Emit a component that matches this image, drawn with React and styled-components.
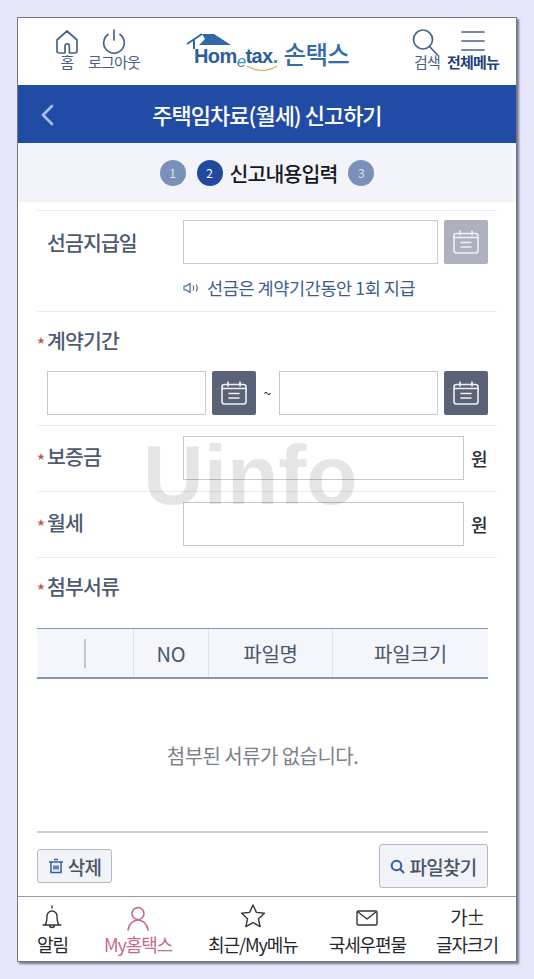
import React from 'react';
import styled, { createGlobalStyle } from 'styled-components';

const GlobalStyle = createGlobalStyle`
  html, body {
    margin: 0;
    padding: 0;
    background: #e6e6fb;
    font-family: "Noto Sans CJK KR", "Noto Sans", sans-serif;
  }
  * { box-sizing: border-box; }
`;

const Page = styled.div`
  width: 534px;
  height: 979px;
  padding: 17px;
  overflow: hidden;
`;

const Phone = styled.div`
  position: relative;
  width: 500px;
  height: 945px;
  display: flex;
  flex-direction: column;
  background: #fff;
  border: 1px solid #77777f;
  box-shadow: 2px 2px 2px #77778a;
`;

const Header = styled.header`
  height: 67px;
  flex: none;
  display: flex;
  align-items: flex-start;
  padding: 10px 17px 0 27px;
`;

const HeaderItem = styled.div`
  width: ${p => p.$w}px;
  margin-left: ${p => p.$ml || 0}px;
  display: flex;
  flex-direction: column;
  align-items: center;
  color: ${p => (p.$strong ? '#1f3f7c' : '#4a5f7f')};
  font-size: 15px;
  font-weight: ${p => (p.$strong ? 700 : 400)};
  letter-spacing: -0.8px;
  line-height: 18px;
  white-space: nowrap;
  svg { display: block; height: 28px; margin-bottom: -3px; }
`;

const Logo = styled.div`
  position: relative;
  width: 164px;
  height: 46px;
  margin-left: 45px;
  margin-top: 5px;
  display: flex;
  align-items: flex-end;
  white-space: nowrap;
`;

const Roof = styled.svg`
  position: absolute;
  left: 0;
  top: 0;
`;

const LogoWord = styled.span`
  margin-left: 8px;
  margin-bottom: 10px;
  font-family: "Liberation Sans", Arial, sans-serif;
  font-size: 20px;
  font-weight: 700;
  letter-spacing: -0.6px;
  line-height: 22px;
  color: #2a5f9c;
`;

const LogoE = styled.span`
  font-style: italic;
  font-weight: 400;
  font-size: 17px;
  color: #3f8fb0;
  position: relative;
  top: 4px;
`;

const LogoDot = styled.span`
  color: #3c9a6a;
`;

const LogoName = styled.span`
  margin-left: 6px;
  margin-bottom: 10px;
  font-size: 24.5px;
  font-weight: 500;
  letter-spacing: -0.7px;
  line-height: 30px;
  color: #2f6ca8;
`;

const Smile = styled.svg`
  position: absolute;
  left: 59px;
  top: 32px;
`;

const RightGroup = styled.div`
  margin-left: auto;
  display: flex;
  gap: 6px;
`;

const SearchGlyph = styled.span`
  display: block;
  margin-right: 5px;
`;

const TitleBar = styled.div`
  position: relative;
  height: 58px;
  flex: none;
  display: flex;
  align-items: center;
  justify-content: center;
  background: #214ca5;
  color: #fff;
  font-size: 22px;
  font-weight: 500;
  letter-spacing: -1px;
`;

const BackIcon = styled.svg`
  position: absolute;
  left: 22px;
  top: 19px;
`;

const Stepper = styled.div`
  height: 59px;
  flex: none;
  display: flex;
  align-items: center;
  justify-content: center;
  gap: 11px;
  background: #f2f4fa;
`;

const StepDot = styled.span`
  width: 26px;
  height: 26px;
  border-radius: 50%;
  display: flex;
  align-items: center;
  justify-content: center;
  font-size: 12px;
  letter-spacing: 0;
  font-weight: 400;
  color: ${p => (p.$active ? '#fff' : '#dde3f0')};
  background: ${p => (p.$active ? '#214a9e' : '#7b90b8')};
`;

const StepActive = styled.div`
  display: flex;
  align-items: center;
  gap: 7px;
  color: #16181e;
  font-size: 20.5px;
  font-weight: 500;
  letter-spacing: -0.9px;
`;

const Content = styled.main`
  position: relative;
  flex: 1;
  padding: 8px 19px 0;
`;

const Watermark = styled.div`
  position: absolute;
  left: 125px;
  top: 223px;
  font-family: "Liberation Sans", Arial, sans-serif;
  font-size: 84px;
  font-weight: 700;
  line-height: 100px;
  color: rgba(0, 0, 0, 0.1);
  pointer-events: none;
`;

const Row = styled.section`
  border-top: 1px solid #eaebef;
  height: ${p => p.$h}px;
  padding-top: ${p => p.$pt ?? 9}px;
`;

const Line = styled.div`
  display: flex;
  align-items: center;
  padding-left: ${p => p.$pl || 0}px;
  margin-top: ${p => p.$mt || 0}px;
`;

const Label = styled.label`
  display: flex;
  align-items: center;
  width: 146px;
  flex: none;
  padding-left: ${p => (p.$plain ? 10 : 0)}px;
  margin-bottom: ${p => (p.$raised ? 5 : 0)}px;
  color: #4d5a70;
  font-size: 20.5px;
  font-weight: 500;
  letter-spacing: -0.9px;
  line-height: 28px;
`;

const Star = styled.span`
  width: 10px;
  flex: none;
  color: #c2534f;
  font-size: 8px;
  line-height: 12px;
`;

const Field = styled.input`
  width: ${p => p.$w}px;
  height: 44px;
  flex: none;
  border: 1px solid #c8c9cd;
  background: transparent;
  border-radius: 0;
  padding: 0;
`;

const CalButton = styled.button`
  width: 44px;
  height: 44px;
  flex: none;
  margin-left: 6px;
  padding: 0;
  border: 0;
  border-radius: 2px;
  display: flex;
  align-items: center;
  justify-content: center;
  background: ${p => (p.$off ? '#aeb0bd' : '#5a6277')};
`;

const Tilde = styled.span`
  width: 23px;
  flex: none;
  text-align: center;
  font-size: 14px;
  color: #333;
`;

const Notice = styled.p`
  margin: 13px 0 0 146px;
  display: flex;
  align-items: center;
  gap: 7px;
  color: #3c5c8c;
  font-size: 17.5px;
  letter-spacing: -0.4px;
  line-height: 22px;
`;

const Unit = styled.span`
  margin-left: 7px;
  color: #2a2d35;
  font-size: 18px;
  font-weight: 500;
`;

const Table = styled.div`
  width: 451px;
  height: 51px;
  margin-top: 28px;
  display: grid;
  grid-template-columns: 96px 75px 124px 156px;
  background: #f4f6fc;
  border-top: 1px solid #8298b4;
  border-bottom: 2px solid #8298b4;
`;

const HeadCell = styled.div`
  display: flex;
  align-items: center;
  justify-content: center;
  border-left: ${p => (p.$first ? 0 : '1px solid #dfe3ec')};
  color: #4a566b;
  font-size: 20px;
  letter-spacing: -0.2px;
`;

const CheckStub = styled.span`
  width: 2px;
  height: 29px;
  background: #c4c6cc;
`;

const Empty = styled.div`
  width: 451px;
  height: 154px;
  display: flex;
  align-items: center;
  justify-content: center;
  border-bottom: 2px solid #d0d1d5;
  color: #7d8187;
  font-size: 20px;
  letter-spacing: -0.55px;
`;

const Actions = styled.div`
  width: 451px;
  margin-top: 11px;
  display: flex;
  align-items: flex-end;
  justify-content: space-between;
`;

const ActionButton = styled.button`
  height: ${p => p.$h}px;
  width: ${p => p.$w}px;
  display: flex;
  align-items: center;
  justify-content: center;
  gap: 4px;
  padding: 0;
  margin-bottom: ${p => p.$mb || 0}px;
  border: 1px solid #b4b8c2;
  border-radius: 3px;
  background: #f1f3f9;
  color: #4b5568;
  font-family: inherit;
  font-size: 19px;
  font-weight: 500;
  letter-spacing: -0.7px;
`;

const BottomNav = styled.nav`
  height: 65px;
  flex: none;
  display: flex;
  padding: 7px 0 0 19px;
  border-top: 1px solid #9a9aa0;
`;

const NavItem = styled.div`
  margin-left: ${p => p.$ml || 0}px;
  display: flex;
  flex-direction: column;
  align-items: center;
  color: ${p => (p.$active ? '#c56a86' : '#24272d')};
  font-size: 18px;
  letter-spacing: -1.1px;
  line-height: 24px;
  white-space: nowrap;
  svg { display: block; }
`;

const FontGlyph = styled.span`
  height: 28px;
  color: #24272d;
  font-size: 19px;
  font-weight: 400;
  line-height: 26px;
  letter-spacing: -1.5px;
`;

const Svg = ({ w = 28, h = 28, color = 'currentColor', sw = 1.7, children }) => (
  <svg width={w} height={h} viewBox={`0 0 ${w} ${h}`} fill="none" stroke={color} strokeWidth={sw} strokeLinecap="round" strokeLinejoin="round">
    {children}
  </svg>
);

const CalendarIcon = ({ color = '#f0f1f5' }) => (
  <svg width="26" height="24" viewBox="0 0 26 24" fill="none" stroke={color} strokeWidth="1.6" strokeLinecap="round" strokeLinejoin="round">
    <rect x="1" y="3.5" width="24" height="19.5" rx="2.5" />
    <path d="M7 1v4M19 1v4M1 7.5h24M8 12.5h10M8 17h10" />
  </svg>
);

const App = () => (
  <Page>
    <GlobalStyle />
    <Phone>
      <Header>
        <HeaderItem $w={44}>
          <Svg color="#4a6286">
            <path d="M6 25h6v-7a2.2 2.2 0 0 1 4.400 0v7h6a1.800 1.800 0 0 0 1.600-2V12L14 3 4 12v11a1.800 1.800 0 0 0 2 2z" />
          </Svg>
          홈
        </HeaderItem>
        <HeaderItem $w={54} $ml={-2}>
          <Svg color="#4a6286">
            <path d="M14 2v10" />
            <path d="M8 6.500a10.300 10.300 0 1 0 12 0" />
          </Svg>
          로그아웃
        </HeaderItem>
        <Logo>
          <Roof width="48" height="24" viewBox="0 0 48 24">
            <path d="M16 1h12l17 11H13l6-6z" fill="#2f6aa8" />
            <path d="M1 11 16 1M8 7v9" fill="none" stroke="#2f6aa8" strokeWidth="2" />
          </Roof>
          <LogoWord>Hom<LogoE>e</LogoE>tax<LogoDot>.</LogoDot></LogoWord>
          <LogoName>손택스</LogoName>
          <Smile width="34" height="10" viewBox="0 0 34 10">
            <path d="M2 1q15 9 30 0" fill="none" stroke="#e2a65a" strokeWidth="1.2" />
          </Smile>
        </Logo>
        <RightGroup>
          <HeaderItem $w={28}>
            <SearchGlyph>
              <Svg w={30} color="#4a6286">
                <circle cx="13" cy="11.500" r="9.500" />
                <path d="m20 19 7.500 8" />
              </Svg>
            </SearchGlyph>
            검색
          </HeaderItem>
          <HeaderItem $w={52} $strong>
            <Svg color="#4a6286">
              <path d="M3 4h22M3 13h22M3 22h22" />
            </Svg>
            전체메뉴
          </HeaderItem>
        </RightGroup>
      </Header>

      <TitleBar>
        <BackIcon width="14" height="22" viewBox="0 0 14 22" fill="none" stroke="#a9bfe6" strokeWidth="2.6" strokeLinecap="round" strokeLinejoin="round">
          <path d="M12 2 3 11l9 9" />
        </BackIcon>
        주택임차료(월세) 신고하기
      </TitleBar>

      <Stepper>
        <StepDot>1</StepDot>
        <StepActive>
          <StepDot $active>2</StepDot>
          신고내용입력
        </StepActive>
        <StepDot>3</StepDot>
      </Stepper>

      <Content>
        <Row $h={101}>
          <Line>
            <Label $plain>선금지급일</Label>
            <Field $w={255} />
            <CalButton $off><CalendarIcon /></CalButton>
          </Line>
          <Notice>
            <svg width="17" height="12" viewBox="0 0 17 12" fill="none" stroke="#3c5c8c" strokeWidth="1.1">
              <path d="M1 4h2.500L7 1.500v9L3.500 8H1zM10 3.500q1.500 2.500 0 5M13 2.500q2.500 3.500 0 7" />
            </svg>
            선금은 계약기간동안 1회 지급
          </Notice>
        </Row>
        <Row $h={114} $pt={14}>
          <Label><Star>★</Star>계약기간</Label>
          <Line $pl={10} $mt={17}>
            <Field $w={159} />
            <CalButton><CalendarIcon /></CalButton>
            <Tilde>~</Tilde>
            <Field $w={159} />
            <CalButton><CalendarIcon /></CalButton>
          </Line>
        </Row>
        <Row $h={66} $pt={10}>
          <Line>
            <Label $raised><Star>★</Star>보증금</Label>
            <Field $w={281} />
            <Unit>원</Unit>
          </Line>
        </Row>
        <Row $h={66} $pt={10}>
          <Line>
            <Label $raised><Star>★</Star>월세</Label>
            <Field $w={281} />
            <Unit>원</Unit>
          </Line>
        </Row>
        <Row $h={275} $pt={14}>
          <Label><Star>★</Star>첨부서류</Label>
          <Table>
            <HeadCell $first><CheckStub /></HeadCell>
            <HeadCell>NO</HeadCell>
            <HeadCell>파일명</HeadCell>
            <HeadCell>파일크기</HeadCell>
          </Table>
          <Empty>첨부된 서류가 없습니다.</Empty>
          <Actions>
            <ActionButton $w={75} $h={34} $mb={5}>
              <svg width="16" height="16" viewBox="0 0 16 16" fill="none" stroke="#2f5fa5" strokeWidth="1.500">
                <path d="M1 4h14M3 4v10.500h10V4M6 1.500h4M6 7.500v4M8 7.500v4M10 7.500v4" />
              </svg>
              삭제
            </ActionButton>
            <ActionButton $w={109} $h={44}>
              <svg width="15" height="15" viewBox="0 0 15 15" fill="none" stroke="#2f5fa5" strokeWidth="2" strokeLinecap="round">
                <circle cx="6.500" cy="6.500" r="4.800" />
                <path d="m10.500 10.500 3 3" />
              </svg>
              파일찾기
            </ActionButton>
          </Actions>
        </Row>
        <Watermark>Uinfo</Watermark>
      </Content>

      <BottomNav>
        <NavItem>
          <Svg w={24} color="#33363c" sw={1.4}>
            <path d="M12 2v2M5 21c1.500-2 2-5 2-9a5 5 0 0 1 10 0c0 4 .5 7 2 9zM3 21h18M9.500 21a2.500 2.500 0 0 0 5 0" />
          </Svg>
          알림
        </NavItem>
        <NavItem $active $ml={36}>
          <Svg w={24} color="#c56a86" sw={1.6}>
            <circle cx="12" cy="9.500" r="6" />
            <path d="M2 26c1-6 5-10 10-10s9 4 10 10" />
          </Svg>
          My홈택스
        </NavItem>
        <NavItem $ml={36}>
          <Svg w={26} color="#33363c" sw={1.4}>
            <path d="m13 1 3.400 7.400 8 .9-6 5.400 1.700 7.900-7.100-4-7.100 4 1.700-7.900-6-5.400 8-.9z" />
          </Svg>
          최근/My메뉴
        </NavItem>
        <NavItem $ml={31}>
          <Svg w={24} color="#33363c" sw={1.4}>
            <rect x="2" y="7" width="20" height="14" rx="1.500" />
            <path d="m3 8 9 7 9-7" />
          </Svg>
          국세우편물
        </NavItem>
        <NavItem $ml={30}>
          <FontGlyph>가±</FontGlyph>
          글자크기
        </NavItem>
      </BottomNav>
    </Phone>
  </Page>
);

export default App;
